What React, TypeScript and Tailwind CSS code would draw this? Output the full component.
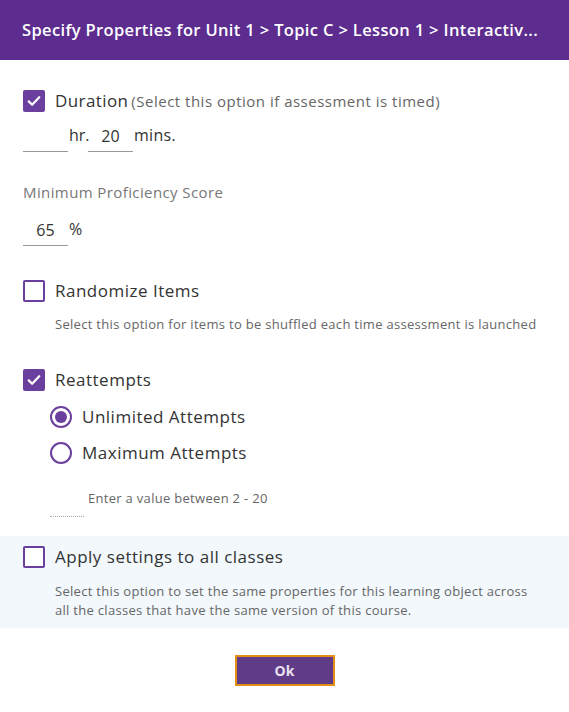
import { useState } from "react";

function Checkbox({ checked }: { checked: boolean }) {
  return checked ? (
    <span className="flex size-[22px] shrink-0 items-center justify-center rounded-[2px] bg-[#6a3f9e]">
      <svg viewBox="0 0 24 24" className="size-[18px]" fill="none" stroke="white" strokeWidth={3} strokeLinecap="round" strokeLinejoin="round">
        <path d="M5 12.5l4.5 4.5L19 7" />
      </svg>
    </span>
  ) : (
    <span className="size-[22px] shrink-0 rounded-[2px] border-2 border-[#6a3f9e] bg-white" />
  );
}

function Radio({ checked }: { checked: boolean }) {
  return (
    <span className="flex size-[22px] shrink-0 items-center justify-center rounded-full border-2 border-[#6a3f9e]">
      {checked && <span className="size-[12px] rounded-full bg-[#6a3f9e]" />}
    </span>
  );
}

export default function App() {
  const [hr] = useState("");
  const [mins] = useState("20");

  return (
    <div className="w-[569px] h-[712px] bg-white text-[#333] font-['Open_Sans',sans-serif]">
      <div className="h-[60px] bg-[#5c2d8f] px-[22px] flex items-center">
        <h1 className="whitespace-nowrap overflow-hidden text-white text-[16.5px] font-semibold tracking-[0.35px]">
          Specify Properties for Unit 1 &gt; Topic C &gt; Lesson 1 &gt; Interactiv...
        </h1>
      </div>

      <div className="px-[23px] pt-[30px]">
        {/* Duration */}
        <div className="flex items-center gap-[10px] h-[22px]">
          <Checkbox checked />
          <span className="text-[17px] tracking-[0.4px] text-[#333]">Duration</span>
          <span className="text-[15px] tracking-[0.5px] text-[#666] -ml-[7px]">(Select this option if assessment is timed)</span>
        </div>
        <div className="mt-[11px] flex items-end text-[16px] text-[#333]">
          <span className="w-[45px] h-[27px] border-b border-[#999] text-center">{hr}</span>
          <span className="w-[20px] pb-[5px] pl-[1px]">hr.</span>
          <span className="w-[45px] h-[27px] border-b border-[#999] text-center leading-[22px]">{mins}</span>
          <span className="pb-[5px] pl-[1px] tracking-[0.3px]">mins.</span>
        </div>

        {/* Proficiency */}
        <div className="mt-[29px] text-[15px] tracking-[0.4px] text-[#777]">Minimum Proficiency Score</div>
        <div className="mt-[13px] flex items-end text-[16px] text-[#333]">
          <span className="w-[45px] h-[27px] border-b border-[#999] text-center leading-[22px]">65</span>
          <span className="pb-[5px] ml-[1px]">%</span>
        </div>

        {/* Randomize */}
        <div className="mt-[34px] flex items-center gap-[10px] h-[22px]">
          <Checkbox checked={false} />
          <span className="text-[17px] tracking-[0.5px] text-[#333]">Randomize Items</span>
        </div>
        <div className="mt-[13px] pl-[32px] text-[13px] tracking-[0.3px] text-[#666]">
          Select this option for items to be shuffled each time assessment is launched
        </div>

        {/* Reattempts */}
        <div className="mt-[35px] flex items-center gap-[10px] h-[22px]">
          <Checkbox checked />
          <span className="text-[17px] tracking-[0.5px] text-[#333]">Reattempts</span>
        </div>
        <div className="mt-[15px] pl-[27px] flex flex-col gap-[14px]">
          <div className="flex items-center gap-[10px] h-[22px]">
            <Radio checked />
            <span className="text-[17px] tracking-[0.5px] text-[#333]">Unlimited Attempts</span>
          </div>
          <div className="flex items-center gap-[10px] h-[22px]">
            <Radio checked={false} />
            <span className="text-[17px] tracking-[0.5px] text-[#333]">Maximum Attempts</span>
          </div>
        </div>
        <div className="mt-[25px] pl-[27px] flex items-start">
          <span className="mt-[27px] w-[34px] border-b border-dotted border-[#aaa]" />
          <span className="ml-[4px] text-[13px] tracking-[0.3px] text-[#666]">Enter a value between 2 - 20</span>
        </div>
      </div>

      {/* Apply settings */}
      <div className="mt-[19px] bg-[#f2f8fc] px-[23px] pt-[10px] pb-[8px]">
        <div className="flex items-center gap-[10px] h-[22px]">
          <Checkbox checked={false} />
          <span className="text-[17px] tracking-[0.5px] text-[#333]">Apply settings to all classes</span>
        </div>
        <p className="mt-[14px] pl-[32px] text-[13px] leading-[19px] tracking-[0.3px] text-[#666]">
          Select this option to set the same properties for this learning object across
          <br />
          all the classes that have the same version of this course.
        </p>
      </div>

      <div className="flex justify-center pt-[27px]">
        <button className="w-[100px] h-[31px] bg-[#603b87] border-2 border-[#e38f15] text-[#e8e0f0] text-[14px] font-bold">
          Ok
        </button>
      </div>
    </div>
  );
}
